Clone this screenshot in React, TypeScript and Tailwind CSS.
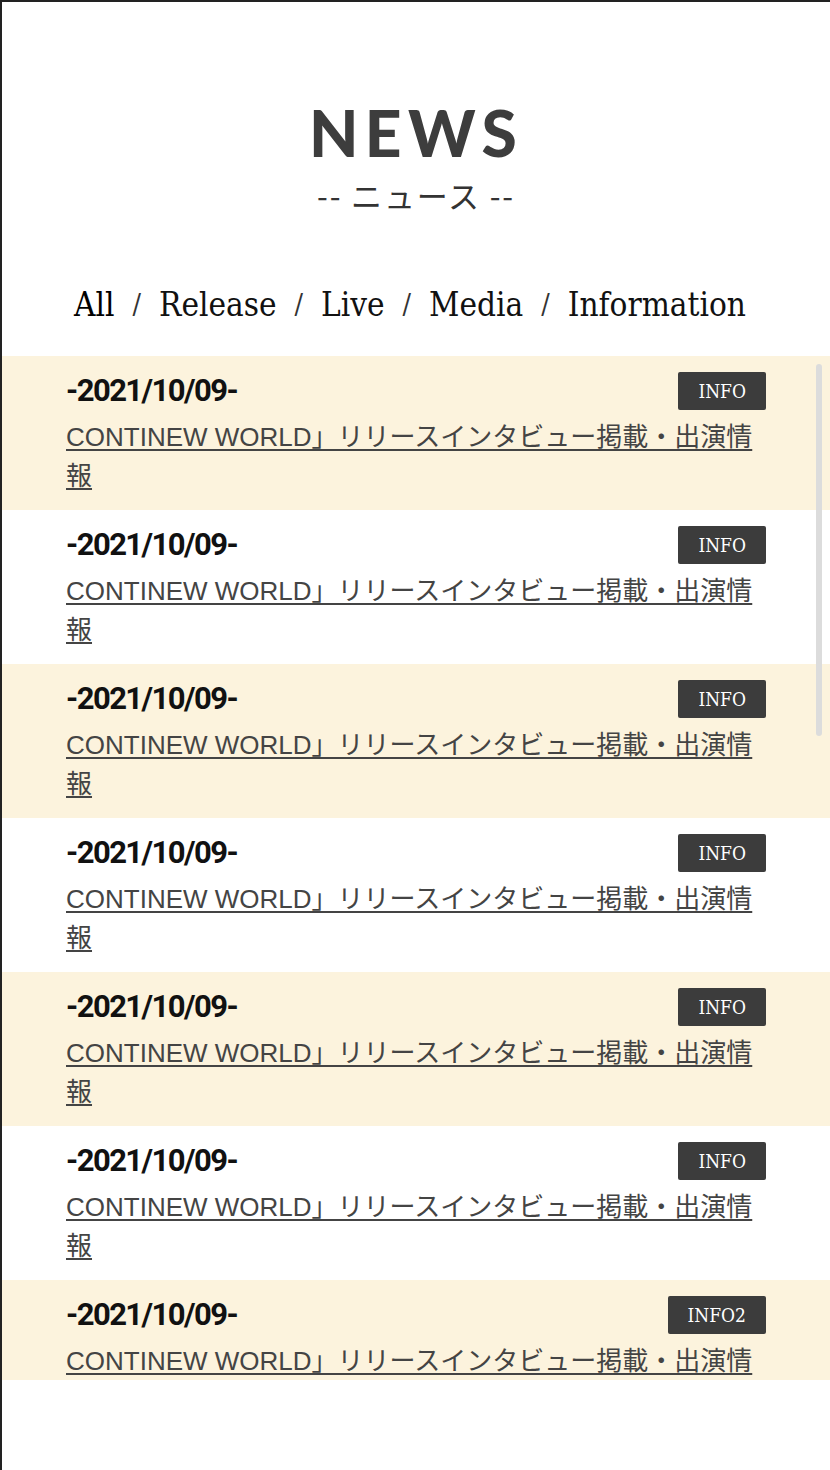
import { useState } from "react";

type NewsItem = {
  date: string;
  title: string;
  tag: string;
};

const categories = ["All", "Release", "Live", "Media", "Information"];

const newsItems: NewsItem[] = Array.from({ length: 18 }, (_, i) => ({
  date: "-2021/10/09-",
  title: "CONTINEW WORLD」リリースインタビュー掲載・出演情報",
  tag: i === 6 ? "INFO2" : "INFO",
}));

const slabFont = { fontFamily: '"DejaVu Serif Condensed", "DejaVu Serif", serif' };

export default function App() {
  const [active, setActive] = useState("All");

  return (
    <div className="min-h-[1470px] border-t-2 border-l-2 border-[#222] bg-white">
      <header className="flex flex-col items-center pt-[99px]">
        <h1
          className="text-[64px] leading-none font-black tracking-[0.1em] text-[#3d3d3d]"
          style={{ fontFamily: "Lato, sans-serif" }}
        >
          NEWS
        </h1>
        <p
          className="mt-[14px] text-[31px] leading-none font-normal tracking-[0.06em] text-[#333]"
          style={{ fontFamily: '"Noto Sans CJK JP", sans-serif' }}
        >
          -- ニュース --
        </p>
      </header>

      <nav className="flex h-[146px] items-center justify-center pt-[44px] pr-[12px] text-[33px] text-[#111]" style={slabFont}>
        {categories.map((cat, i) => (
          <span key={cat} className="flex items-center">
            {i > 0 ? <span className="mx-[18px] text-[28px] text-[#333]">/</span> : null}
            <button type="button" onClick={() => setActive(cat)} className={active === cat ? "text-black" : "text-[#111]"}>
              {cat}
            </button>
          </span>
        ))}
      </nav>

      <div className="relative h-[1024px] overflow-hidden">
        <ul>
          {newsItems.map((item, i) => (
            <li key={i} className={`px-16 pt-4 pb-[14px] ${i % 2 === 0 ? "bg-[#fcf3dd]" : "bg-white"}`}>
              <div className="flex h-[38px] items-center justify-between">
                <span
                  className="text-[31px] font-bold tracking-[-0.05em] text-[#111]"
                  style={{ fontFamily: "Roboto, sans-serif" }}
                >
                  {item.date}
                </span>
                <span
                  className="flex h-[38px] items-center rounded-[2px] bg-[#3c3c3c] px-[20px] text-[19px] text-white"
                  style={slabFont}
                >
                  {item.tag}
                </span>
              </div>
              <a
                href="#"
                className="mt-2 block text-[26px] leading-[39px] text-[#444] underline underline-offset-[3px]"
                style={{ fontFamily: '"Liberation Sans", "Noto Sans CJK JP", sans-serif' }}
              >
                {item.title}
              </a>
            </li>
          ))}
        </ul>
        <div className="absolute top-[8px] right-[8px] h-[372px] w-[6px] rounded-full bg-[#dcdcdc]" />
      </div>
    </div>
  );
}
